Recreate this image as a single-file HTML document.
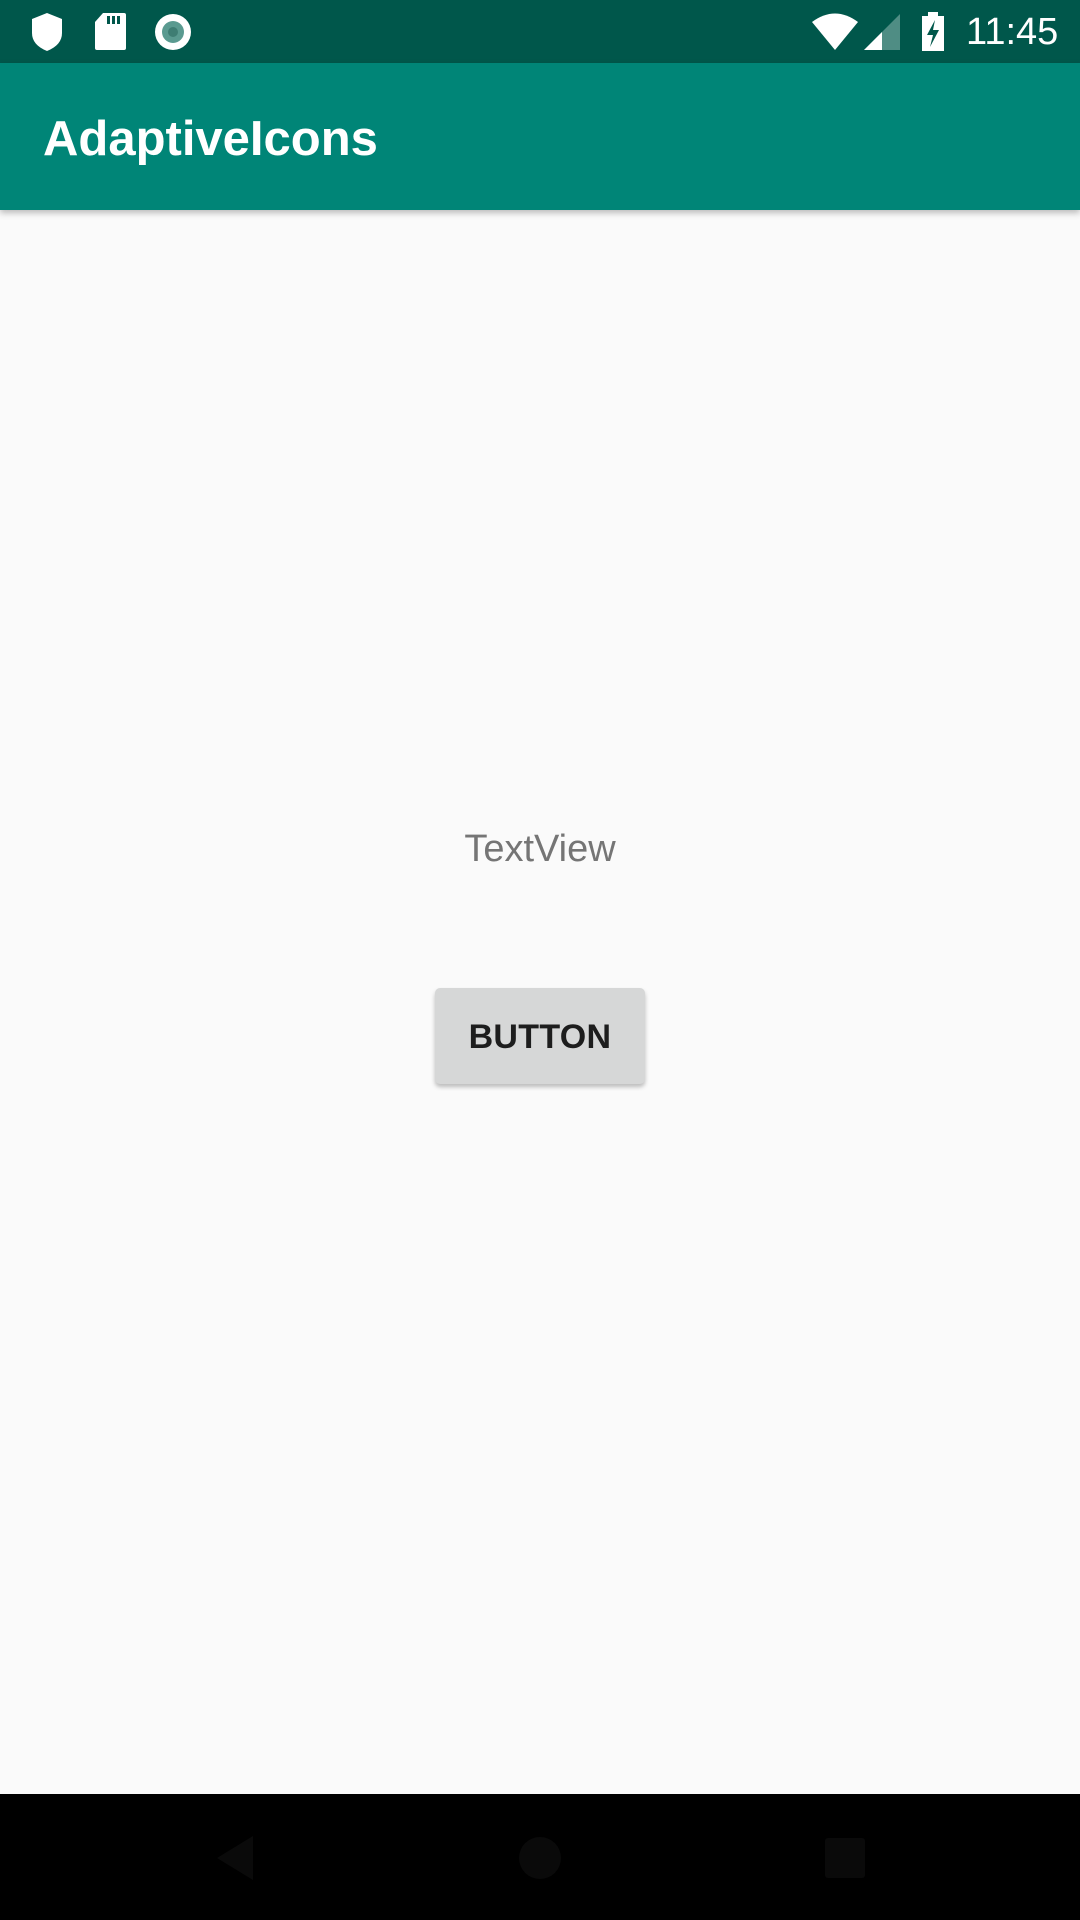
<!DOCTYPE html>
<html><head><meta charset="utf-8"><style>
body{margin:0;width:1080px;height:1920px;background:#fafafa;position:relative;overflow:hidden;font-family:"Liberation Sans",sans-serif}
.sb{position:absolute;left:0;top:0;width:1080px;height:63px;background:#00574b}
.ab{position:absolute;left:0;top:63px;width:1080px;height:147px;background:#008577;box-shadow:0 3px 6px rgba(0,0,0,.25)}
.title{position:absolute;left:43px;top:107px;color:#fff;font-size:49px;line-height:64px;font-weight:bold}
.tv{position:absolute;left:0;width:1080px;top:825px;text-align:center;color:#757575;font-size:38px;line-height:48px}
.btn{position:absolute;left:435px;top:988px;width:210px;height:96px;background:#d6d7d7;border-radius:5px;box-shadow:0 3px 4px rgba(0,0,0,.25);text-align:center;line-height:98px;font-size:34px;font-weight:bold;color:#1d1d1d;letter-spacing:0.3px}
.nav{position:absolute;left:0;top:1794px;width:1080px;height:126px;background:#000}
.time{position:absolute;left:966px;top:10px;color:#fff;font-size:38px;line-height:44px}
</style></head><body>
<div class="sb">
<svg width="1080" height="63" style="position:absolute;left:0;top:0">
<path d="M32 19 L47 13 L62 19 L62 33 Q62 45 47 51 Q32 45 32 33 Z" fill="#fff"/>
<path d="M103 13 L124 13 Q126 13 126 15 L126 48 Q126 50 124 50 L97 50 Q95 50 95 48 L95 22 Z" fill="#fff"/>
<rect x="107" y="16" width="3" height="8" fill="#00574b"/><rect x="112" y="16" width="3" height="8" fill="#00574b"/><rect x="117" y="16" width="3" height="8" fill="#00574b"/>
<circle cx="173" cy="32" r="18" fill="#fff"/><circle cx="173" cy="32" r="11" fill="#5a9a90"/><circle cx="173" cy="32" r="5" fill="#3e7d73"/>
<path d="M812 22 Q835 5 858 22 L835 50 Z" fill="#fff"/>
<path d="M864 50 L900 14 L900 50 Z" fill="#4f8d84"/>
<path d="M864 50 L882 32 L882 50 Z" fill="#fff"/>
<rect x="922" y="16" width="22" height="35" fill="#fff"/><rect x="928" y="12" width="10" height="5" fill="#fff"/>
<path d="M935 20 L927 35 L933 35 L930 47 L939 30 L933 30 Z" fill="#00574b"/>
</svg>
<div class="time">11:45</div>
</div>
<div class="ab"></div>
<div class="title">AdaptiveIcons</div>
<div class="tv">TextView</div>
<div class="btn">BUTTON</div>
<div class="nav">
<svg width="1080" height="126" style="position:absolute;left:0;top:0">
<path d="M253 42 L253 86 L217 64 Z" fill="#0a0a0a"/>
<circle cx="540" cy="64" r="21" fill="#0a0a0a"/>
<rect x="825" y="44" width="40" height="40" rx="3" fill="#0a0a0a"/>
</svg>
</div>
</body></html>
